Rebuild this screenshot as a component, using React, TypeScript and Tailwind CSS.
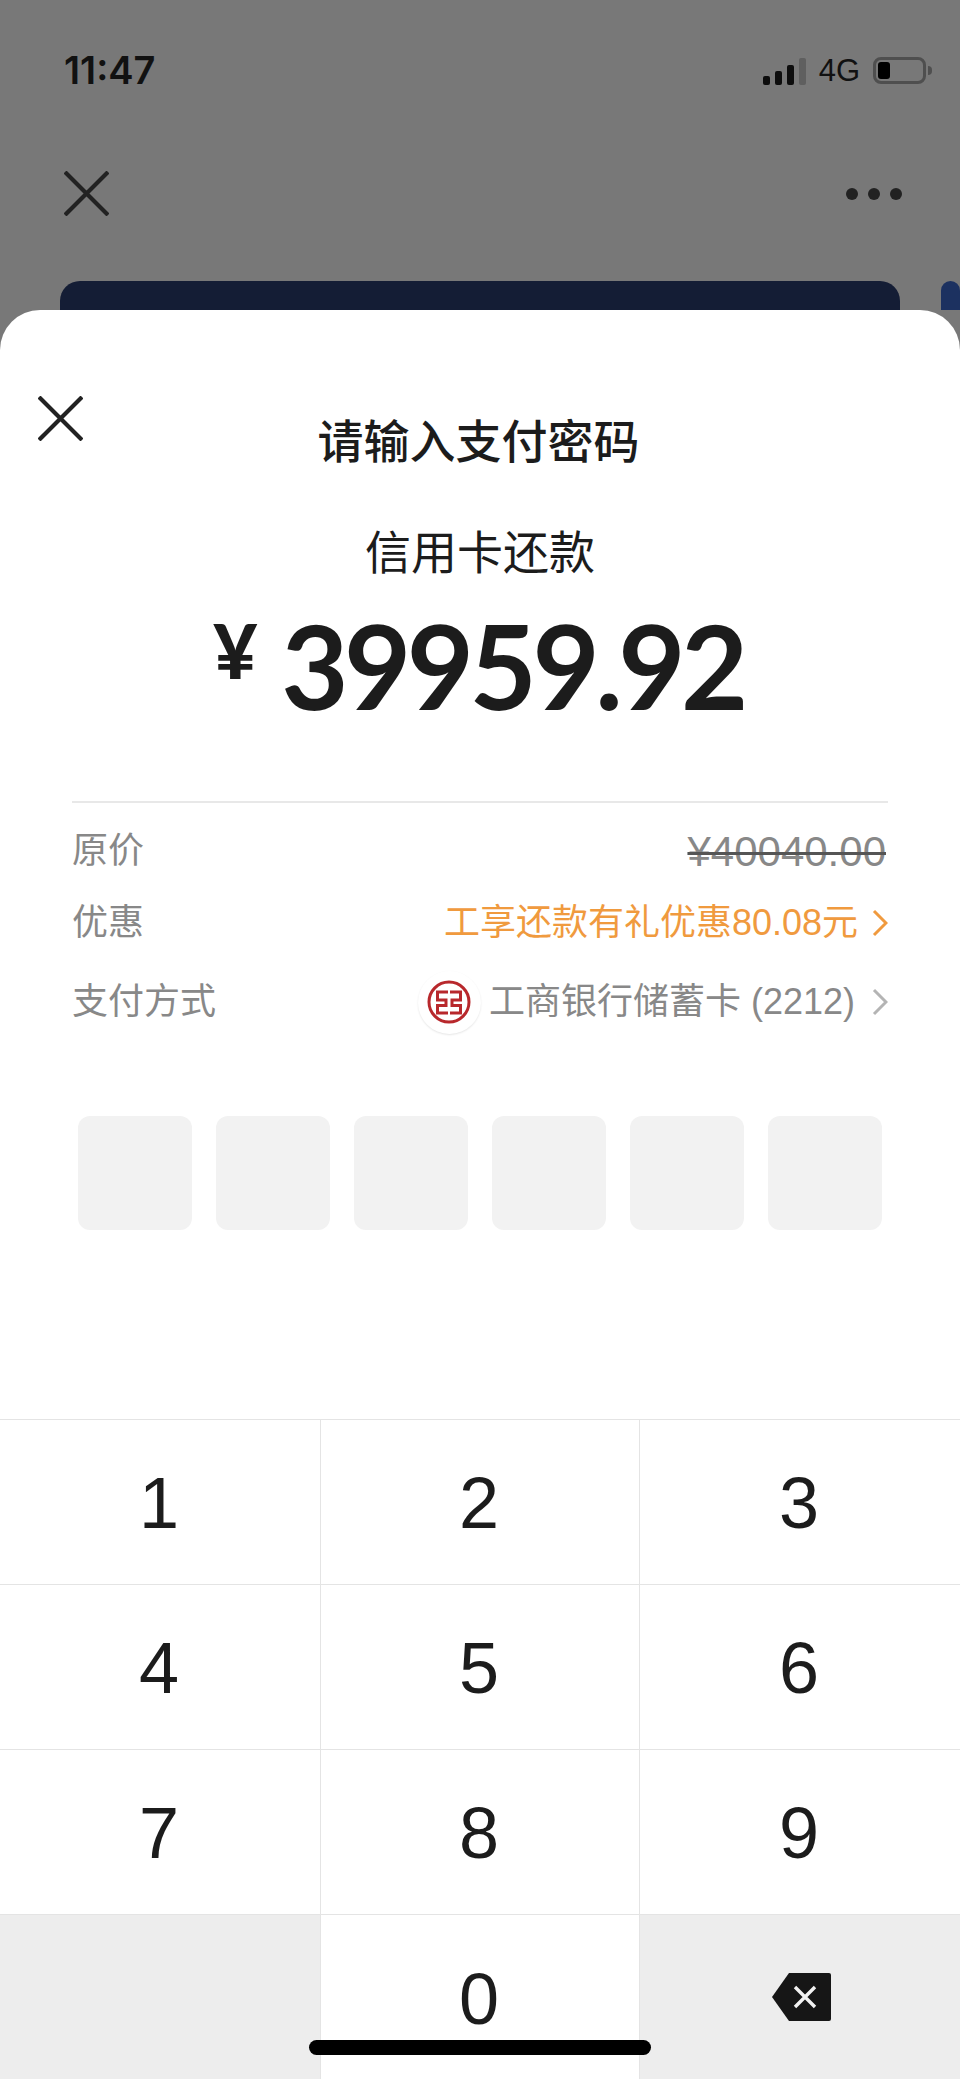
const sans = 'font-["Liberation_Sans","Noto_Sans_CJK_SC",sans-serif]';
const cjk = 'font-["Noto_Sans_CJK_SC",sans-serif]';

function Cross({ className }: { className?: string }) {
  return (
    <svg viewBox="0 0 45 45" className={className} fill="none" stroke="#222" strokeWidth="4.2">
      <path d="M1 1l43 43M44 1L1 44" />
    </svg>
  );
}

function Chevron({ className }: { className?: string }) {
  return (
    <svg viewBox="0 0 16 28" className={`w-[16px] h-[28px] ${className ?? ''}`} fill="none" stroke="currentColor" strokeWidth="3">
      <path d="M2 2l12 12L2 26" />
    </svg>
  );
}

function StatusBar() {
  return (
    <div className="h-[140px] pl-[64px] pr-[28px] flex items-center justify-between">
      <div className="font-['Inter',sans-serif] text-[38px] leading-none font-semibold text-[#111]">11:47</div>
      <div className="flex items-center">
        <div className="flex items-end gap-[5px] h-[27px] mt-[2px]">
          <div className="w-[7px] h-[9px] rounded-[2px] bg-[#0d0d0d]" />
          <div className="w-[7px] h-[14px] rounded-[2px] bg-[#0d0d0d]" />
          <div className="w-[7px] h-[20px] rounded-[2px] bg-[#0d0d0d]" />
          <div className="w-[7px] h-[27px] rounded-[2px] bg-[#5f5f5f]" />
        </div>
        <div className={`${sans} ml-[13px] text-[31px] leading-none text-[#111]`}>4G</div>
        <div className="ml-[13px] w-[53px] h-[27px] rounded-[8px] border-[3px] border-[#4f4f4f] p-[2px]">
          <div className="w-[12px] h-full rounded-[3px] bg-black" />
        </div>
        <div className="ml-[2px] w-[4px] h-[9px] rounded-r-[4px] bg-[#4f4f4f]" />
      </div>
    </div>
  );
}

function IcbcLogo() {
  return (
    <div className="-my-[7px] w-[63px] h-[63px] rounded-full bg-white shadow-[0_1px_2px_rgba(0,0,0,0.1)] grid place-items-center">
      <svg viewBox="0 0 44 44" className="w-[44px] h-[44px]" fill="none" stroke="#b8282c">
        <circle cx="22" cy="22" r="20" strokeWidth="3" />
        <path d="M21 12H10.500v8H19v5.500h-8.500V33H21M23 12h10.500v8H25v5.500h8.500V33H23" strokeWidth="3" />
      </svg>
    </div>
  );
}

function InfoRow({ label, children, className }: { label: string; children: React.ReactNode; className?: string }) {
  return (
    <div className={`flex items-center justify-between ${className ?? ''}`}>
      <div className="text-[#888] text-[36px] leading-[50px]">{label}</div>
      {children}
    </div>
  );
}

const keys = ['1', '2', '3', '4', '5', '6', '7', '8', '9'];

function Keypad() {
  return (
    <div className={`${sans} grid grid-cols-3 grid-rows-[165px_165px_165px_165px] text-[72px] text-[#1c1c1c]`}>
      {keys.map((k, i) => (
        <div
          key={k}
          className={`border-t border-[#e4e4e4] grid place-items-center pt-[2px] pr-[2px] ${i % 3 === 1 ? 'border-x' : ''}`}
        >
          {k}
        </div>
      ))}
      <div className="border-t border-[#e4e4e4] bg-[#ededed]" />
      <div className="border-t border-x border-[#e4e4e4] grid place-items-center pt-[3px] pr-[2px]">0</div>
      <div className="border-t border-[#e4e4e4] bg-[#ededed] flex items-start pl-[131px] pt-[58px]">
        <svg viewBox="0 0 60 48" className="w-[60px] h-[48px]">
          <path d="M18 0h40a2 2 0 0 1 2 2v44a2 2 0 0 1-2 2H18L1 24z" fill="#161616" />
          <path d="M24 14l20 20M44 14L24 34" stroke="#f2f2f2" strokeWidth="3.4" fill="none" />
        </svg>
      </div>
    </div>
  );
}

export default function App() {
  return (
    <div className={`${cjk} relative w-[960px] h-[2079px] overflow-hidden bg-[#787878] flex flex-col`}>
      <StatusBar />
      <div className="h-[141px] pl-[64px] pr-[58px] flex items-start justify-between pt-[31px]">
        <Cross className="w-[45px] h-[45px]" />
        <div className="flex gap-[10px] mt-[17px]">
          <div className="w-[12px] h-[12px] rounded-full bg-[#222]" />
          <div className="w-[12px] h-[12px] rounded-full bg-[#222]" />
          <div className="w-[12px] h-[12px] rounded-full bg-[#222]" />
        </div>
      </div>
      <div className="h-[29px] pl-[60px] flex gap-[41px]">
        <div className="w-[840px] rounded-t-[20px] bg-[#141d35]" />
        <div className="flex-1 rounded-t-[20px] bg-[#1c3160]" />
      </div>

      <div className="relative flex-1 rounded-t-[40px] bg-white flex flex-col">
        <Cross className="absolute left-[38px] top-[86px] w-[45px] h-[45px]" />
        <div className="mt-[106px] pr-[3px] text-center text-[46px] leading-[45px] font-medium text-[#1c1c1c]">请输入支付密码</div>
        <div className="mt-[66px] text-center text-[46px] leading-[45px] text-[#1c1c1c]">信用卡还款</div>

        <div className="mt-[34px] h-[120px] pr-[3px] flex items-center justify-center text-[#1c1c1c] font-['Lato',sans-serif] font-bold">
          <span className="text-[76px] leading-none font-black mr-[24px] -mt-[32px]">¥</span>
          <span className="text-[116px] leading-none tracking-[-4.5px]">39959.92</span>
        </div>

        <div className={`${sans} mx-[72px] mt-[75px] border-t-2 border-[#e8e8e8]`}>
          <InfoRow label="原价" className="mt-[21px]">
            <div className="text-[#888] text-[42px] leading-[50px] mt-[3px] mr-[2px] line-through decoration-[#555] decoration-[3px]">¥40040.00</div>
          </InfoRow>
          <InfoRow label="优惠" className="mt-[21px]">
            <div className="flex items-center text-[#f09a3e] text-[36px] leading-[50px]">
              工享还款有礼优惠80.08元
              <Chevron className="ml-[14px]" />
            </div>
          </InfoRow>
          <InfoRow label="支付方式" className="mt-[29px]">
            <div className="flex items-center text-[#888] text-[36px] leading-[50px]">
              <IcbcLogo />
              <span className="ml-[8px]">工商银行储蓄卡 (2212)</span>
              <Chevron className="ml-[17px] text-[#b4b4b4]" />
            </div>
          </InfoRow>
        </div>

        <div className="mt-[89px] mx-[78px] flex gap-[24px]">
          {[0, 1, 2, 3, 4, 5].map((i) => (
            <div key={i} className="w-[114px] h-[114px] rounded-[12px] bg-[#f2f2f2]" />
          ))}
        </div>

        <div className="flex-1" />
        <Keypad />
      </div>

      <div className="absolute left-[309px] top-[2040px] w-[342px] h-[15px] rounded-full bg-black" />
    </div>
  );
}
